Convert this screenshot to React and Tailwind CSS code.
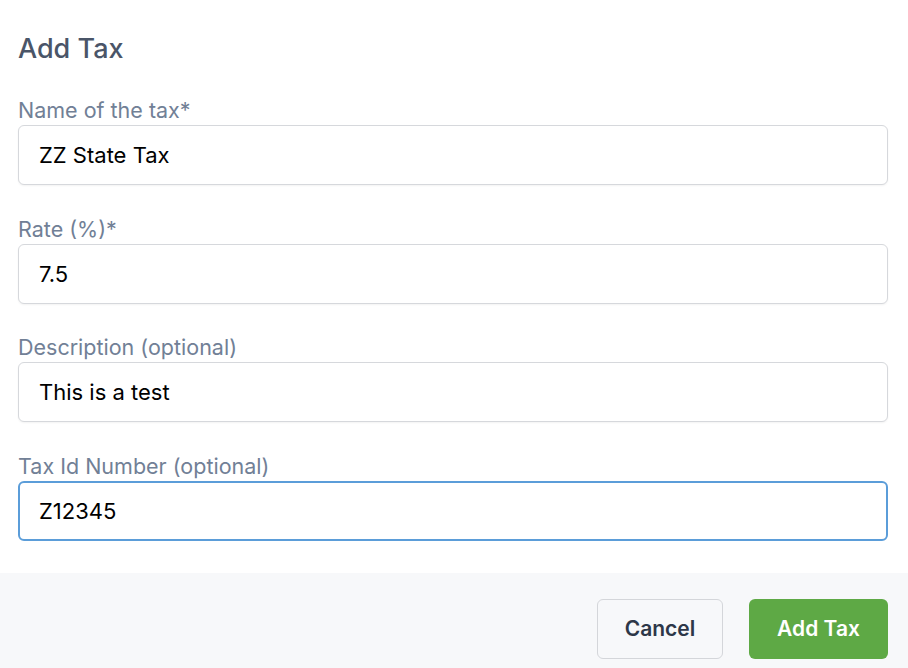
import React from 'react';

const fields = [
  { label: 'Name of the tax*', value: 'ZZ State Tax' },
  { label: 'Rate (%)*', value: '7.5' },
  { label: 'Description (optional)', value: 'This is a test' },
  { label: 'Tax Id Number (optional)', value: 'Z12345', focused: true },
];

const App = () => {
  return (
    <div className="w-[908px] h-[668px] overflow-hidden bg-white" style={{ fontFamily: 'Inter, "Noto Sans", sans-serif' }}>
      <div className="pl-[18px] pr-[20px] pt-[31px] pb-[32px]">
        <h2 className="text-[27px] leading-[36px] font-medium text-[#4a5568] mb-[28px]">Add Tax</h2>
        <div className="flex flex-col gap-[28.7px]">
          {fields.map((f) => (
            <div key={f.label}>
              <label className="block text-[21.5px] leading-[30px] text-[#718096]">{f.label}</label>
              <input
                readOnly
                value={f.value}
                className={
                  f.focused
                    ? 'w-full h-[60px] rounded-[6px] border-2 border-[#5b9dd9] px-[19px] text-[22px] text-black bg-white outline-none'
                    : 'w-full h-[60px] rounded-[6px] border border-[#d6d8dc] px-[20px] text-[22px] text-black bg-white outline-none shadow-[0_1px_2px_rgba(0,0,0,0.05)]'
                }
              />
            </div>
          ))}
        </div>
      </div>
      <div className="bg-[#f7f8fa] h-[95px] px-[20px] pt-[26px] flex justify-end gap-[26px]">
        <button className="h-[60px] w-[126px] rounded-[6px] border border-[#d4d6da] bg-[#f7f8fa] text-[21px] font-semibold text-[#2d3748]">Cancel</button>
        <button className="h-[60px] w-[139px] rounded-[6px] bg-[#5ea945] text-[21px] font-semibold text-white">Add Tax</button>
      </div>
    </div>
  );
};

export default App;
